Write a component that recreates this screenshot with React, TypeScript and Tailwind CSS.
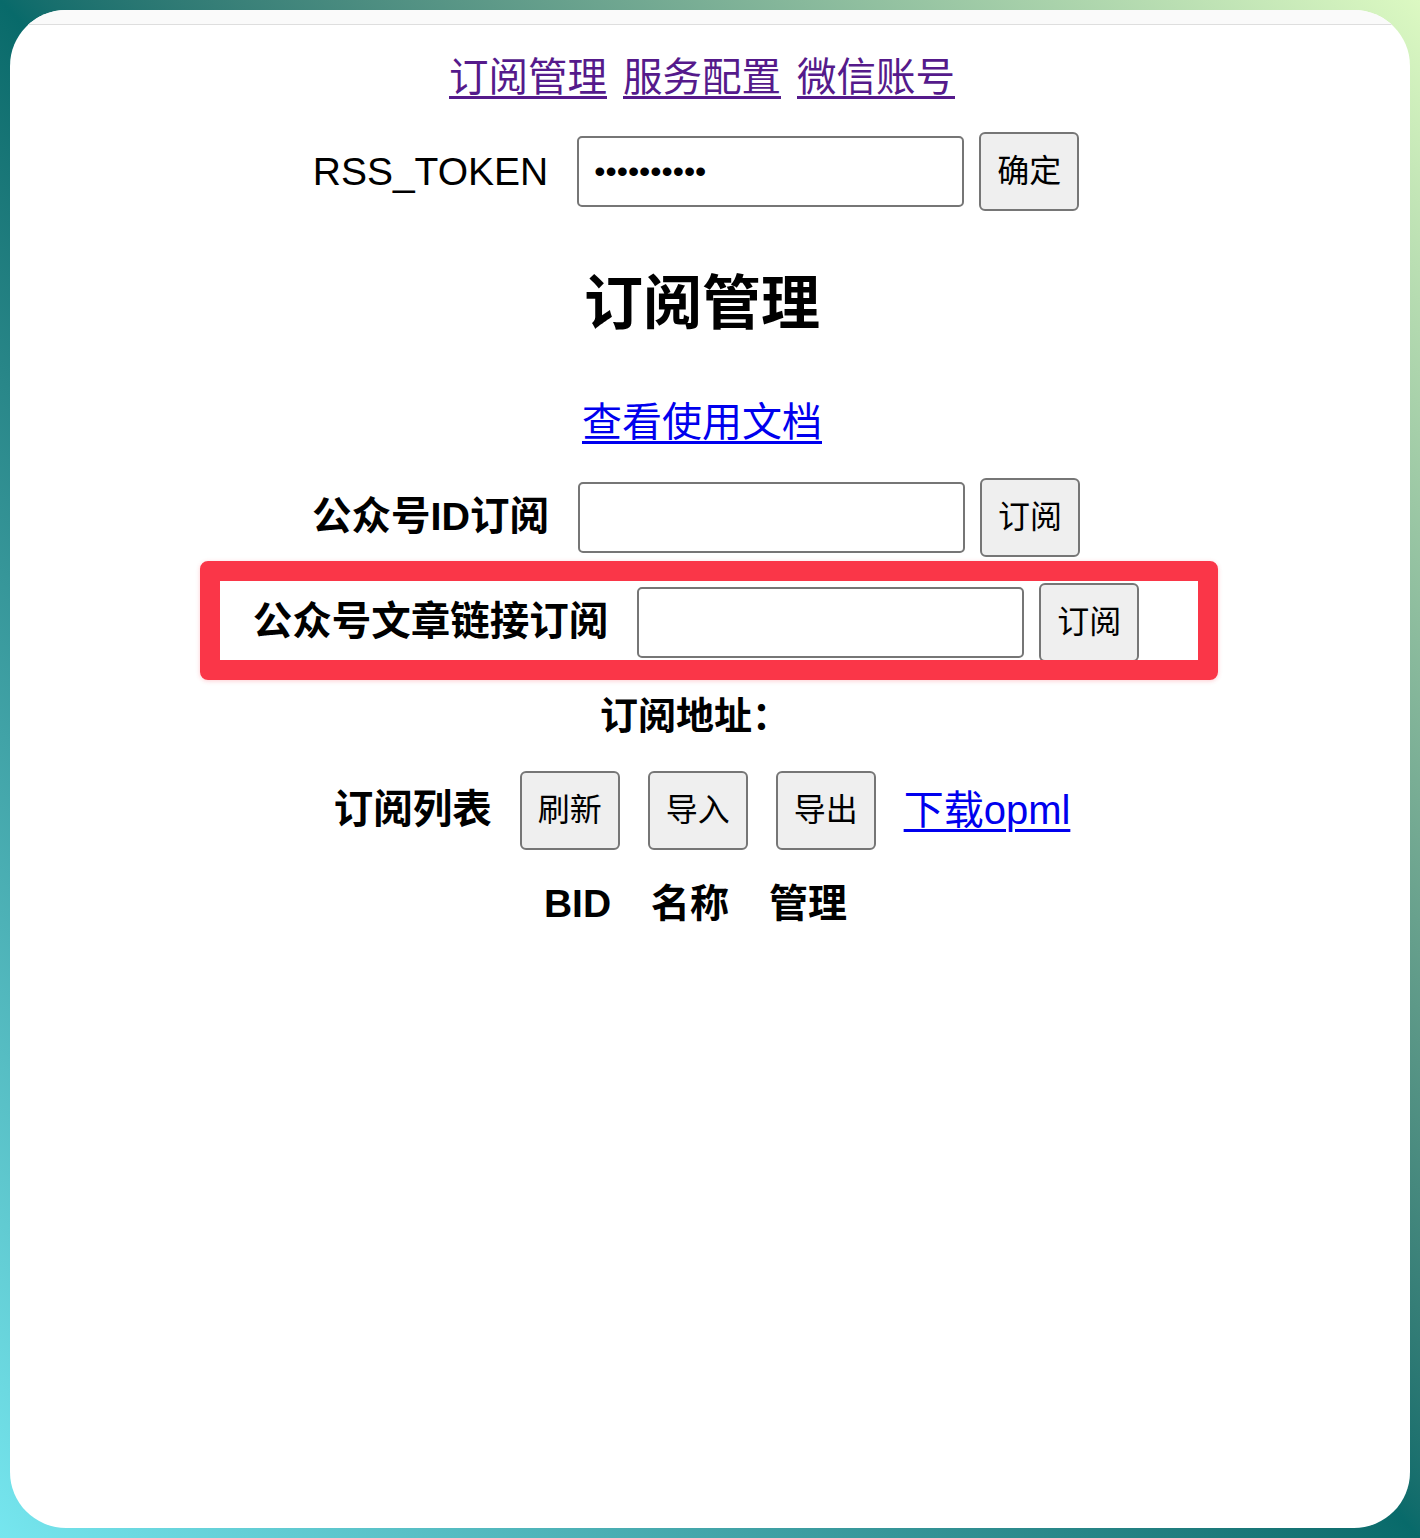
import type { ReactNode } from "react";

function Btn({ children }: { children: ReactNode }) {
  return (
    <button
      type="button"
      className="flex h-[79px] w-[100px] shrink-0 items-center justify-center rounded-[6px] border-2 border-[#767676] bg-[#efefef] text-[32px] leading-none text-black"
    >
      {children}
    </button>
  );
}

function Field({ password }: { password?: boolean }) {
  return (
    <input
      type={password ? "password" : "text"}
      defaultValue={password ? "0123456789" : ""}
      className="h-[71px] w-[387px] shrink-0 rounded-[5px] border-2 border-[#767676] bg-white px-[15px] text-[32px] text-black outline-none"
    />
  );
}

export default function App() {
  return (
    <div className="min-h-screen w-full bg-linear-to-bl from-[#dcf9c2] via-[#086a6a] to-[#76e6ef] p-[10px] font-['Liberation_Sans','Noto_Sans_CJK_SC',sans-serif]">
      <div className="h-[1518px] overflow-hidden rounded-[56px] bg-white">
        <div className="h-[15px] border-b border-[#dedede] bg-[#fafafa]" />

        <div className="flex flex-col pr-[16px] text-black">
          {/* top nav */}
          <nav className="flex h-[106px] items-center justify-center gap-[16px] text-[39.5px] leading-none text-[#551a8b]">
            <a href="#" className="underline decoration-[3px] underline-offset-[5px]">订阅管理</a>
            <a href="#" className="underline decoration-[3px] underline-offset-[5px]">服务配置</a>
            <a href="#" className="underline decoration-[3px] underline-offset-[5px]">微信账号</a>
          </nav>

          {/* token */}
          <div className="mr-[12px] flex h-[80px] items-center justify-center">
            <label className="text-[39px] leading-none">RSS_TOKEN</label>
            <div className="ml-[29px] flex items-center gap-[15px]">
              <Field password />
              <Btn>确定</Btn>
            </div>
          </div>

          <h2 className="mt-[53px] flex h-[80px] items-center justify-center text-[59px] font-bold leading-none">
            订阅管理
          </h2>

          <div className="mt-[38px] flex h-[80px] items-center justify-center">
            <a href="#" className="text-[40px] leading-none text-[#0000ee] underline decoration-[3px] underline-offset-[5px]">
              查看使用文档
            </a>
          </div>

          <div className="mr-[12px] mt-[15px] flex h-[80px] items-center justify-center">
            <label className="text-[39.5px] font-bold leading-none">公众号ID订阅</label>
            <div className="ml-[29px] flex items-center gap-[15px]">
              <Field />
              <Btn>订阅</Btn>
            </div>
          </div>

          <div className="relative mt-[25px]">
            <div className="mr-[12px] flex h-[80px] items-center justify-center">
              <label className="text-[39.5px] font-bold leading-none">公众号文章链接订阅</label>
              <div className="ml-[29px] flex items-center gap-[15px]">
                <Field />
                <Btn>订阅</Btn>
              </div>
            </div>
            {/* annotation frame */}
            <div className="pointer-events-none absolute left-[190px] top-[-21px] h-[119px] w-[1018px] rounded-[8px] border-[20px] border-[#fa3648] shadow-[0_1px_4px_rgba(250,54,72,0.25)]" />
          </div>

          <div className="mr-[14px] mt-[14px] flex h-[80px] items-center justify-center text-[38px] font-bold leading-none">
            订阅地址：
          </div>

          <div className="mt-[14px] flex h-[80px] items-center justify-center gap-[28px]">
            <span className="text-[39.5px] font-bold leading-none">订阅列表</span>
            <Btn>刷新</Btn>
            <Btn>导入</Btn>
            <Btn>导出</Btn>
            <a href="#" className="text-[40px] leading-none text-[#0000ee] underline decoration-[3px] underline-offset-[5px]">
              下载opml
            </a>
          </div>

          <div className="mr-[13px] mt-[13px] flex h-[80px] items-center justify-center gap-[40px] text-[39px] font-bold leading-none">
            <span>BID</span>
            <span>名称</span>
            <span>管理</span>
          </div>
        </div>
      </div>
    </div>
  );
}
